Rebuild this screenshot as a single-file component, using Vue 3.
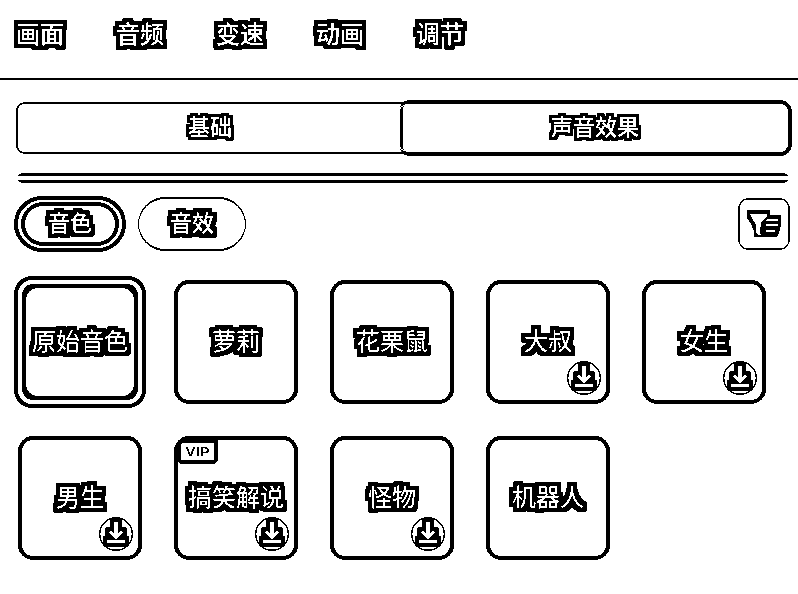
<script setup>
import { ref } from 'vue'

const tabs = ['画面', '音频', '变速', '动画', '调节']
const voices = [
  { name: '原始音色' },
  { name: '萝莉' },
  { name: '花栗鼠' },
  { name: '大叔', download: true },
  { name: '女生', download: true },
  { name: '男生', download: true },
  { name: '搞笑解说', download: true, vip: true },
  { name: '怪物', download: true },
  { name: '机器人' },
]
const selected = ref(0)
</script>

<template>
  <main class="panel">
    <svg class="defs" width="0" height="0" aria-hidden="true">
      <filter v-for="r in [3, 4]" :id="`outline-${r}`" :key="r" x="-25%" y="-25%" width="150%" height="150%" color-interpolation-filters="sRGB">
        <feComponentTransfer in="SourceGraphic" result="glyph">
          <feFuncA type="linear" slope="20" intercept="-9" />
        </feComponentTransfer>
        <feMorphology in="glyph" operator="dilate" :radius="r" result="fat" />
        <feColorMatrix in="fat" values="0 0 0 0 0  0 0 0 0 0  0 0 0 0 0  0 0 0 1 0" result="edge" />
        <feMerge>
          <feMergeNode in="edge" />
          <feMergeNode in="glyph" />
        </feMerge>
      </filter>
    </svg>

    <nav class="tabs">
      <span v-for="t in tabs" :key="t" class="tab">{{ t }}</span>
    </nav>

    <div class="segments">
      <div class="segment"><span class="seg-text">基础</span></div>
      <div class="segment active"><span class="seg-text">声音效果</span></div>
    </div>

    <div class="divider"></div>

    <div class="toolbar">
      <div class="pill on"><div class="pill-inner"><span class="pill-text">音色</span></div></div>
      <div class="pill"><span class="pill-text">音效</span></div>
      <div class="filter">
        <svg class="filter-icon" width="52" height="52" viewBox="0 0 52 52" shape-rendering="crispEdges">
          <path d="M9 12H32V17H43V27L41 35L39 39H16V33L13 26L9 20Z" fill="#000" />
          <path d="M12 16H29V18L23 25V28L22 30V34L23 37H20L18 34V27L14 20Z" fill="#fff" />
          <path d="M29 21H40V23H28ZM28 26H40V28H28ZM28 32H37V34H28Z" fill="#fff" />
        </svg>
      </div>
    </div>

    <div class="grid">
      <div v-for="(v, i) in voices" :key="v.name" class="card" :class="{ selected: i === selected }">
        <span class="name">{{ v.name }}</span>
        <span v-if="v.vip" class="vip"><b class="vip-text">VIP</b></span>
        <span v-if="v.download" class="download">
          <svg class="arrow" width="34" height="34" viewBox="0 0 34 34" fill="none" stroke="#fff">
            <path d="M17 5V20M11 14.5L17 20.5L23 14.5" stroke-width="3" />
            <path d="M8 24.5H26" stroke-width="3" />
          </svg>
        </span>
      </div>
    </div>
  </main>
</template>

<style>
body { background: #fff; }
</style>

<style scoped>
.panel {
  width: 798px;
  height: 594px;
  box-sizing: border-box;
  overflow: hidden;
  background: #fff;
  color: #fff;
  font-family: "Noto Sans CJK SC", sans-serif;
  filter: contrast(100);
}
.defs { display: block; position: absolute; }
.tabs {
  display: flex;
  gap: 52px;
  height: 80px;
  box-sizing: border-box;
  padding: 15px 16px 0;
  border-bottom: 2px solid #000;
}
.tab {
  font-size: 24px;
  line-height: 36px;
  height: 36px;
  font-weight: 500;
  filter: url(#outline-4);
}
.segments {
  display: flex;
  width: 776px;
  height: 56px;
  margin: 20px 0 0 16px;
}
.segment {
  position: relative;
  width: 388px;
  height: 52px;
  margin-top: 2px;
  margin-right: -4px;
  display: flex;
  align-items: center;
  justify-content: center;
  background: #000;
  border-radius: 9px 0 0 9px;
}
.segment::before {
  content: "";
  position: absolute;
  inset: 2px 0 2px 2px;
  background: #fff;
  border-radius: 6px 0 0 6px;
}
.segment.active {
  width: 392px;
  height: 56px;
  box-sizing: border-box;
  margin: 0;
  padding-left: 2px;
  background: #fff;
  border: 4px solid #000;
  border-left-width: 0;
  border-radius: 9px 12px 12px 9px;
}
.segment.active::before {
  inset: 2px auto 2px 0;
  width: 5px;
  box-sizing: border-box;
  border-left: 3px solid #000;
  border-radius: 5px 0 0 5px;
}
.seg-text {
  position: relative;
  padding-bottom: 6px;
  font-size: 22px;
  line-height: 32px;
  font-weight: 500;
  filter: url(#outline-3);
}
.divider {
  width: 770px;
  height: 10px;
  box-sizing: border-box;
  margin: 17px 0 0 18px;
  border-top: 3px solid #000;
  border-bottom: 3px solid #000;
  border-radius: 5px / 3px;
}
.toolbar {
  display: flex;
  align-items: center;
  height: 56px;
  margin: 13px 8px 0 14px;
}
.pill {
  width: 108px;
  height: 54px;
  box-sizing: border-box;
  border: solid #000;
  border-width: 2px 1px;
  border-radius: 27px;
  display: flex;
  align-items: center;
  justify-content: center;
}
.pill.on {
  width: 112px;
  height: 56px;
  margin-right: 12px;
  border-width: 4px;
  border-radius: 28px;
}
.pill-inner {
  width: 98px;
  height: 44px;
  flex: none;
  box-sizing: border-box;
  border: 4px solid #000;
  border-radius: 22px;
  display: flex;
  align-items: center;
  justify-content: center;
}
.pill-text {
  padding-bottom: 6px;
  font-size: 22px;
  line-height: 32px;
  font-weight: 500;
  filter: url(#outline-4);
}
.filter {
  position: relative;
  width: 52px;
  height: 52px;
  margin-left: auto;
  background: #000;
  border-radius: 11px;
}
.filter::before {
  content: "";
  position: absolute;
  inset: 2px;
  background: #fff;
  border-radius: 7px;
}
.filter-icon { position: relative; display: block; }
.grid {
  display: grid;
  grid-template-columns: repeat(5, 124px);
  grid-auto-rows: 124px;
  gap: 32px;
  margin: 28px 0 0 18px;
}
.card {
  position: relative;
  box-sizing: border-box;
  border: 4px solid #000;
  border-radius: 15px;
  display: flex;
  align-items: center;
  justify-content: center;
}
.card.selected {
  width: 132px;
  height: 132px;
  margin: -4px;
  border-radius: 18px;
}
.card.selected::before {
  content: "";
  position: absolute;
  inset: 4px;
  background: #000;
  border-radius: 11px;
}
.card.selected::after {
  content: "";
  position: absolute;
  inset: 8px;
  background: #fff;
  border-radius: 12px;
}
.name {
  position: relative;
  z-index: 1;
  padding-bottom: 4px;
  font-size: 24px;
  line-height: 36px;
  font-weight: 400;
  white-space: nowrap;
  filter: url(#outline-4);
}
.vip {
  position: absolute;
  left: -1px;
  top: -1px;
  width: 41px;
  height: 25px;
  box-sizing: border-box;
  border: 4px solid #000;
  border-radius: 6px 3px 5px 5px;
  background: #fff;
  display: flex;
  align-items: center;
  justify-content: center;
}
.vip-text {
  color: #000;
  font: 700 13px/17px "Liberation Sans", sans-serif;
  transform: scaleX(1.15);
}
.download {
  position: absolute;
  right: 5px;
  bottom: 5px;
  width: 34px;
  height: 34px;
  border-radius: 50%;
  box-shadow: inset 0 0 0 1.4px #000;
  overflow: hidden;
}
.arrow {
  display: block;
  filter: url(#outline-4);
}
</style>
